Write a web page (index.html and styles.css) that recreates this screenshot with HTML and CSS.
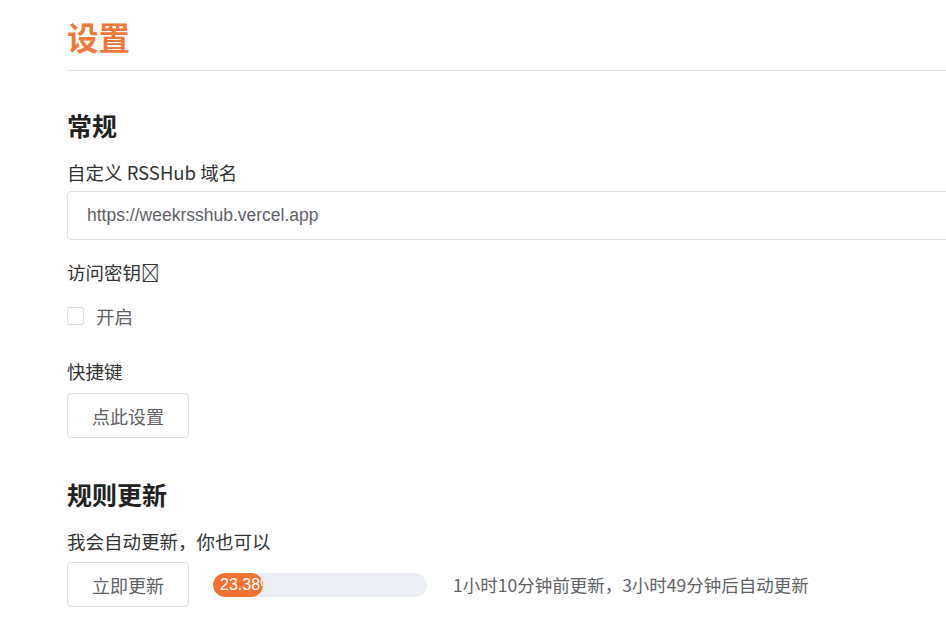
FILE: index.html
```html
<!DOCTYPE html>
<html lang="zh">
<head>
<meta charset="utf-8">
<link rel="stylesheet" href="styles.css">
</head>
<body>
<div class="page">
  <h1 class="title">设置</h1>
  <div class="divider"></div>

  <h2 class="section">常规</h2>
  <div class="label">自定义 RSSHub 域名</div>
  <div class="input">https://weekrsshub.vercel.app</div>

  <div class="label label-gap">访问密钥&#xE000;</div>
  <label class="check">
    <span class="box"></span>
    <span class="check-text">开启</span>
  </label>

  <div class="label label-gap2">快捷键</div>
  <button class="btn">点此设置</button>

  <h2 class="section section-2">规则更新</h2>
  <div class="label">我会自动更新，你也可以</div>
  <div class="update-row">
    <button class="btn">立即更新</button>
    <div class="progress">
      <div class="progress-fill" style="width: 23.38%"><span class="progress-text">23.38%</span></div>
    </div>
    <span class="time">1小时10分钟前更新，3小时49分钟后自动更新</span>
  </div>
</div>
</body>
</html>
```

FILE: styles.css
```css
html, body {
  margin: 0;
  padding: 0;
  background: #fff;
  overflow: hidden;
}
body {
  font-family: "Noto Sans CJK SC", "Liberation Sans", sans-serif;
  color: #333;
}
.page {
  width: 1000px;
  padding: 13px 0 0 67px;
}
.title {
  margin: 0;
  font-size: 31.5px;
  font-weight: 700;
  line-height: 46px;
  color: #f1773a;
}
.divider {
  height: 1px;
  background: #e4e4e4;
  margin-top: 11px;
}
.section {
  margin: 36px 0 0;
  font-size: 25px;
  font-weight: 700;
  line-height: 36px;
  color: #222;
}
.section-2 {
  margin-top: 38px;
}
.label {
  font-size: 18.5px;
  line-height: 28px;
  color: #333;
  margin-top: 15px;
}
.label-gap {
  margin-top: 18px;
}
.label-gap2 {
  margin-top: 29px;
}
.input {
  margin-top: 5px;
  height: 49px;
  box-sizing: border-box;
  border: 1px solid #dcdfe6;
  border-radius: 4px;
  padding: 0 19px;
  display: flex;
  align-items: center;
  font-family: "Liberation Sans", sans-serif;
  font-size: 17.5px;
  color: #606266;
}
.check {
  display: flex;
  align-items: center;
  margin-top: 18px;
  height: 24px;
}
.box {
  width: 15px;
  height: 16px;
  border: 1px solid #dcdfe6;
  border-radius: 2px;
  background: #fff;
}
.check-text {
  margin-left: 12px;
  font-size: 18.5px;
  color: #606266;
}
.btn {
  display: block;
  margin-top: 8px;
  width: 122px;
  height: 45px;
  box-sizing: border-box;
  border: 1px solid #dcdfe6;
  border-radius: 4px;
  background: #fff;
  font-family: "Noto Sans CJK SC", sans-serif;
  font-size: 18px;
  color: #606266;
  padding: 0;
}
.update-row {
  display: flex;
  align-items: center;
  margin-top: 7px;
}
.update-row .btn {
  margin-top: 0;
}
.progress {
  margin-left: 24px;
  width: 214px;
  height: 24px;
  border-radius: 12px;
  background: #ebeef5;
  overflow: hidden;
}
.progress-fill {
  height: 100%;
  background: #f1732f;
  border-radius: 12px;
  overflow: hidden;
  white-space: nowrap;
}
.progress-text {
  display: block;
  padding-left: 7px;
  font-family: "Liberation Sans", sans-serif;
  font-size: 16px;
  line-height: 24px;
  color: #fff;
}
.time {
  margin-left: 26px;
  font-size: 17.5px;
  color: #606266;
}
```
